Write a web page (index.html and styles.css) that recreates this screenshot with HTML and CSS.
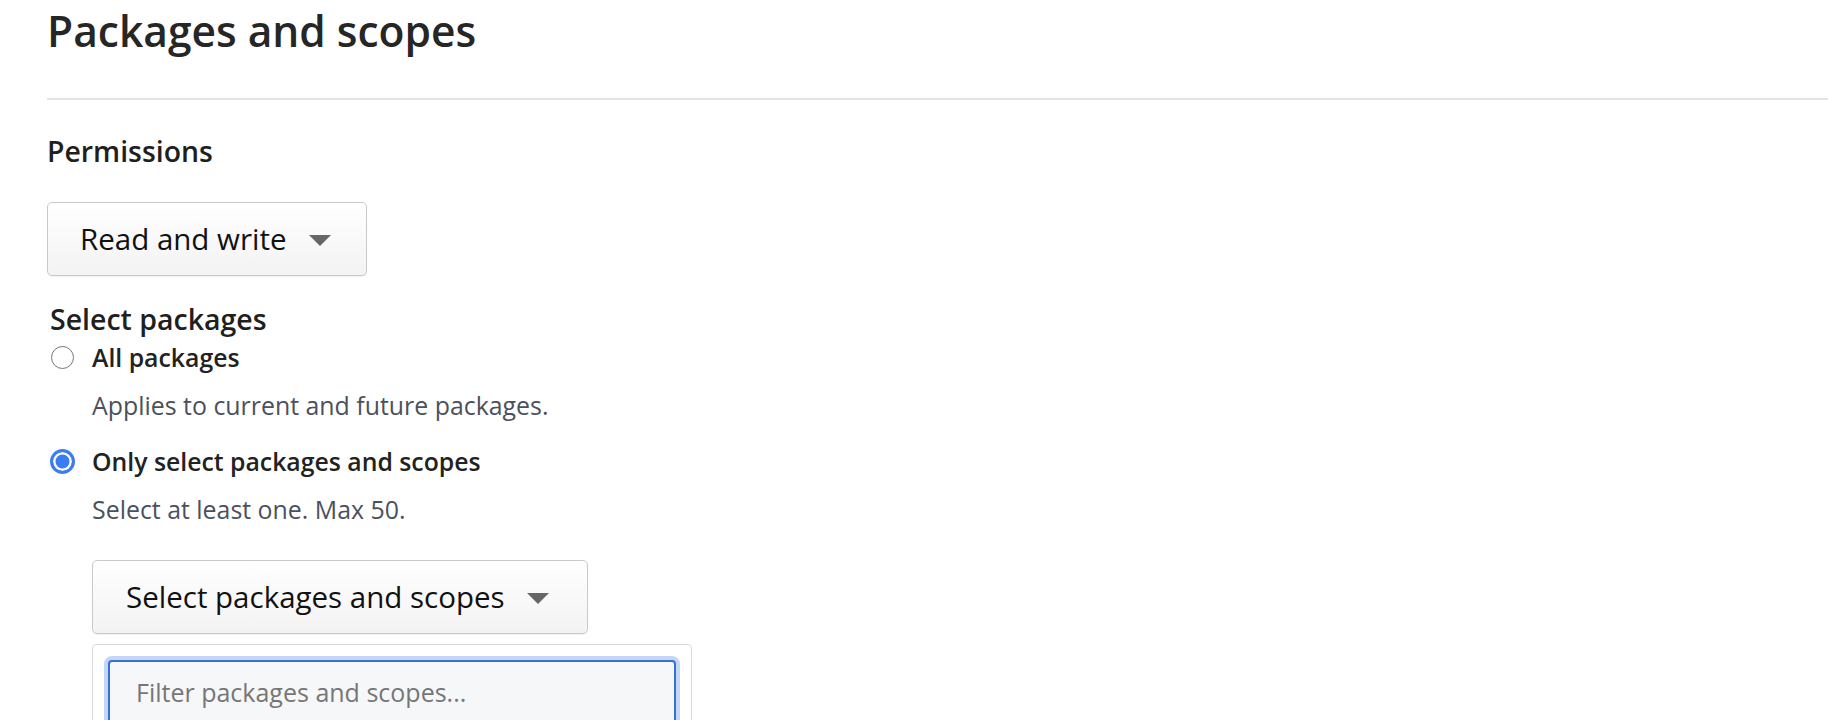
FILE: index.html
```html
<!DOCTYPE html>
<html lang="en">
<head>
    <meta charset="UTF-8">
    <meta name="viewport" content="width=device-width, initial-scale=1.0">
    <title>Packages and scopes</title>
    <link rel="stylesheet" href="styles.css">
</head>
<body>
    <div class="page">
        <h1 class="title">Packages and scopes</h1>
        <hr class="divider">

        <div class="permissions">
            <h2 class="section-label">Permissions</h2>
            <button class="dropdown">Read and write <span class="caret"></span></button>
        </div>

        <div class="packages">
            <h2 class="group-label">Select packages</h2>

            <label class="option">
                <input type="radio" name="scope" class="radio">
                <span class="option-body">
                    <span class="option-title">All packages</span>
                    <span class="option-hint">Applies to current and future packages.</span>
                </span>
            </label>

            <label class="option">
                <input type="radio" name="scope" class="radio" checked>
                <span class="option-body">
                    <span class="option-title">Only select packages and scopes</span>
                    <span class="option-hint">Select at least one. Max 50.</span>
                </span>
            </label>

            <div class="picker">
                <button class="dropdown">Select packages and scopes <span class="caret"></span></button>
                <div class="menu">
                    <input type="text" class="filter" placeholder="Filter packages and scopes...">
                </div>
            </div>
        </div>
    </div>
</body>
</html>
```

FILE: styles.css
```css
body {
    margin: 0;
    font-family: "Open Sans", "Noto Sans", Arial, sans-serif;
    background-color: #fff;
    color: #222;
}
.page {
    padding-left: 47px;
}
.title {
    margin: 6px 0 0;
    font-size: 42.5px;
    line-height: 50px;
    font-weight: 600;
    color: #262626;
}
.divider {
    margin: 42px 0 0;
    border: none;
    height: 2px;
    background-color: #e4e4e4;
}
.section-label {
    margin: 34px 0 0;
    font-size: 28.4px;
    line-height: 34px;
    font-weight: 600;
    color: #1f1f1f;
}
.dropdown {
    display: inline-flex;
    align-items: center;
    gap: 22px;
    height: 74px;
    padding: 0 35px 0 32px;
    font-family: inherit;
    font-size: 29.5px;
    line-height: 36px;
    color: #111;
    background: linear-gradient(#fff, #f3f3f3);
    border: 1.5px solid #c9c9c9;
    border-radius: 5px;
    box-shadow: 0 1px 1px rgba(0, 0, 0, 0.06);
    cursor: pointer;
}
.permissions .dropdown {
    margin-top: 34px;
}
.picker .dropdown {
    padding-left: 33px;
    padding-right: 38px;
}
.caret {
    width: 0;
    height: 0;
    border-left: 11px solid transparent;
    border-right: 11px solid transparent;
    border-top: 11px solid #666;
    margin-top: 2px;
}
.packages {
    margin-left: 3px;
}
.group-label {
    margin: 26px 0 6px;
    font-size: 28.5px;
    line-height: 34px;
    font-weight: 600;
    color: #1f1f1f;
}
.option {
    display: grid;
    grid-template-columns: 42px 1fr;
    margin-bottom: 26px;
}
.radio {
    appearance: none;
    margin: 4px 0 0 1px;
    width: 23px;
    height: 23px;
    border: 1.5px solid #767676;
    border-radius: 50%;
    background-color: #fff;
}
.radio:checked {
    width: 25px;
    height: 25px;
    margin: 3px 0 0;
    border: 3px solid #3b7cf5;
    background-color: #3b7cf5;
    box-shadow: inset 0 0 0 2.5px #fff;
}
.option-body {
    display: flex;
    flex-direction: column;
    gap: 18px;
}
.option-title {
    font-size: 24.8px;
    line-height: 30px;
    font-weight: 600;
    color: #222;
}
.option-hint {
    font-size: 24.9px;
    line-height: 30px;
    color: #4b515c;
}
.picker {
    margin: 36px 0 0 42px;
}
.menu {
    margin-top: 10px;
    width: 568px;
    padding: 15px;
    border: 1.5px solid #d6d9dd;
    border-radius: 4px;
}
.filter {
    display: block;
    width: 100%;
    box-sizing: border-box;
    padding: 15px 26px;
    font-family: inherit;
    font-size: 25px;
    line-height: 30px;
    color: #222;
    background-color: #f6f7f9;
    border: 2px solid #3370d8;
    border-radius: 4px;
    box-shadow: 0 0 0 4px #c4d6f4;
    outline: none;
}
.filter::placeholder {
    color: #767676;
}
```
